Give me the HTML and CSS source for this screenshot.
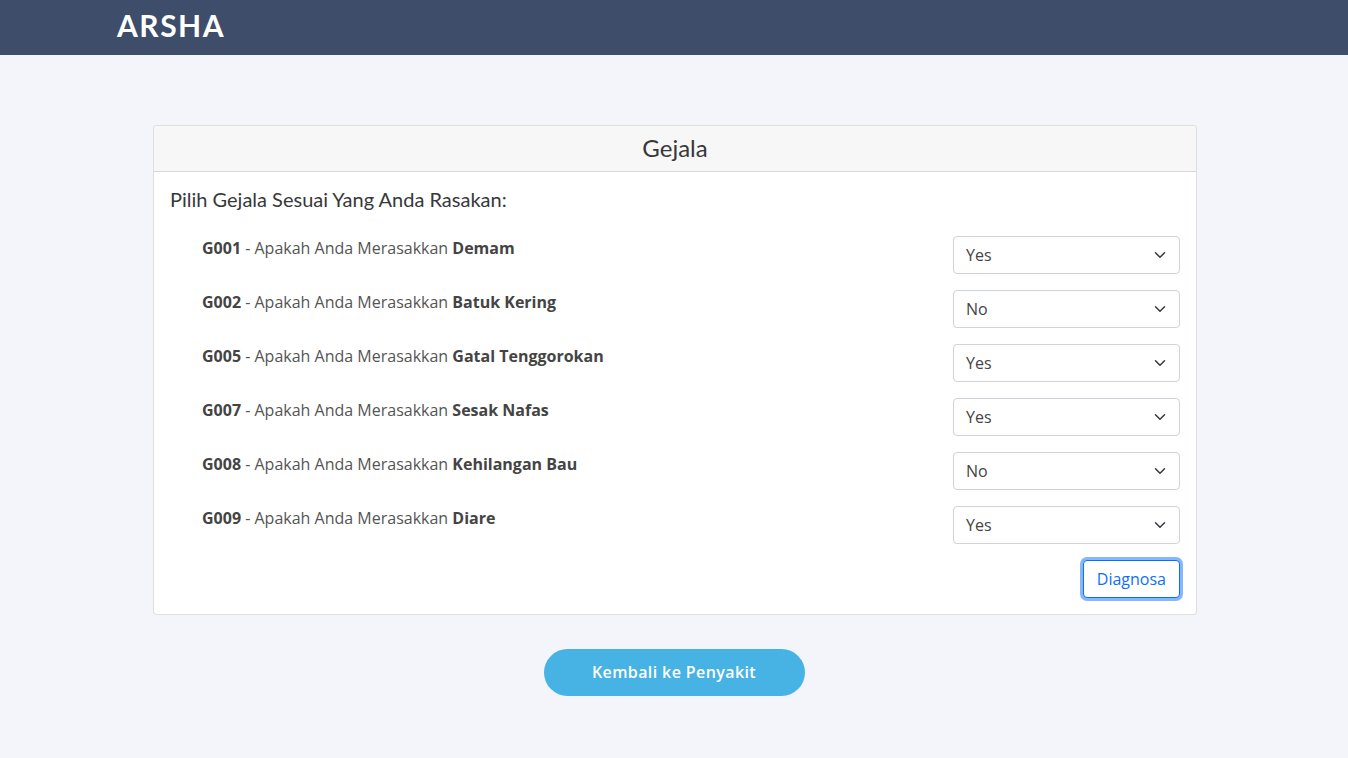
FILE: index.html
```html
<!DOCTYPE html>
<html lang="id">
<head>
<meta charset="utf-8">
<title>Gejala</title>
<link rel="stylesheet" href="styles.css">
</head>
<body>
<header class="topbar">
  <div class="container">
    <span class="logo">ARSHA</span>
  </div>
</header>
<main class="main">
  <div class="card-wrap">
  <div class="card">
    <div class="card-header">Gejala</div>
    <div class="card-body">
      <h5 class="title">Pilih Gejala Sesuai Yang Anda Rasakan:</h5>
      <div class="row">
        <label class="label"><b>G001</b> - Apakah Anda Merasakkan <b>Demam</b></label>
        <div class="select"><span>Yes</span><svg viewBox="0 0 16 16" class="chev"><path d="M2 5l6 6 6-6" fill="none" stroke="#343a40" stroke-width="2" stroke-linecap="round" stroke-linejoin="round"/></svg></div>
      </div>
      <div class="row">
        <label class="label"><b>G002</b> - Apakah Anda Merasakkan <b>Batuk Kering</b></label>
        <div class="select"><span>No</span><svg viewBox="0 0 16 16" class="chev"><path d="M2 5l6 6 6-6" fill="none" stroke="#343a40" stroke-width="2" stroke-linecap="round" stroke-linejoin="round"/></svg></div>
      </div>
      <div class="row">
        <label class="label"><b>G005</b> - Apakah Anda Merasakkan <b>Gatal Tenggorokan</b></label>
        <div class="select"><span>Yes</span><svg viewBox="0 0 16 16" class="chev"><path d="M2 5l6 6 6-6" fill="none" stroke="#343a40" stroke-width="2" stroke-linecap="round" stroke-linejoin="round"/></svg></div>
      </div>
      <div class="row">
        <label class="label"><b>G007</b> - Apakah Anda Merasakkan <b>Sesak Nafas</b></label>
        <div class="select"><span>Yes</span><svg viewBox="0 0 16 16" class="chev"><path d="M2 5l6 6 6-6" fill="none" stroke="#343a40" stroke-width="2" stroke-linecap="round" stroke-linejoin="round"/></svg></div>
      </div>
      <div class="row">
        <label class="label"><b>G008</b> - Apakah Anda Merasakkan <b>Kehilangan Bau</b></label>
        <div class="select"><span>No</span><svg viewBox="0 0 16 16" class="chev"><path d="M2 5l6 6 6-6" fill="none" stroke="#343a40" stroke-width="2" stroke-linecap="round" stroke-linejoin="round"/></svg></div>
      </div>
      <div class="row">
        <label class="label"><b>G009</b> - Apakah Anda Merasakkan <b>Diare</b></label>
        <div class="select"><span>Yes</span><svg viewBox="0 0 16 16" class="chev"><path d="M2 5l6 6 6-6" fill="none" stroke="#343a40" stroke-width="2" stroke-linecap="round" stroke-linejoin="round"/></svg></div>
      </div>
      <div class="actions">
        <button class="btn-diag" type="button">Diagnosa</button>
      </div>
    </div>
  </div>
  </div>
  <div class="back-wrap">
    <a class="btn-back" href="#">Kembali ke Penyakit</a>
  </div>
</main>
</body>
</html>
```
FILE: styles.css
```css
* { box-sizing: border-box; }
html, body { margin: 0; padding: 0; }
body {
  background: #f3f5fa;
  font-family: "Open Sans", "Liberation Sans", sans-serif;
  font-size: 16px;
  color: #444444;
  height: 758px;
  overflow: hidden;
}
.topbar {
  background: #3d4d6a;
  height: 55px;
}
.container {
  width: 1140px;
  margin: 0 auto;
  padding: 0 12px 0 13px;
  height: 100%;
  display: flex;
  align-items: center;
}
.logo {
  font-family: "Lato", "Noto Sans", sans-serif;
  color: #ffffff;
  font-size: 30px;
  font-weight: 700;
  letter-spacing: 1.5px;
  line-height: 1;
  margin-top: -6px;
}
.main {
  padding-top: 70px;
}
.card-wrap {
  padding-left: 2px;
}
.card {
  width: 1044px;
  margin: 0 auto;
  background: #ffffff;
  border: 1px solid rgba(0,0,0,.125);
  border-radius: 4px;
}
.card-header {
  height: 46px;
  background: #f7f7f7;
  border-bottom: 1px solid rgba(0,0,0,.125);
  border-radius: 4px 4px 0 0;
  text-align: center;
  font-family: "Lato", "Noto Sans", sans-serif;
  font-size: 24px;
  font-weight: 400;
  color: #37383a;
  line-height: 44px;
}
.card-body {
  padding: 16px;
}
.title {
  margin: 0 0 24px;
  font-family: "Lato", "Noto Sans", sans-serif;
  font-size: 20px;
  font-weight: 400;
  line-height: 22px;
  padding-bottom: 2px;
  color: #37383a;
}
.row {
  display: flex;
  justify-content: space-between;
  align-items: flex-start;
  padding-left: 32px;
  margin-bottom: 16px;
}
.label {
  line-height: 24px;
  color: #555555;
}
.label b { color: #444444; font-weight: 700; }
.select {
  width: 227px;
  height: 38px;
  border: 1px solid #ced4da;
  border-radius: 4px;
  padding: 0 13px 0 12px;
  display: flex;
  align-items: center;
  justify-content: space-between;
  color: #444444;
  background: #fff;
}
.chev { width: 12px; height: 12px; }
.actions {
  display: flex;
  justify-content: flex-end;
}
.btn-diag {
  height: 38px;
  padding: 0 13px;
  font-family: "Open Sans", "Liberation Sans", sans-serif;
  font-size: 16px;
  color: #0d6efd;
  background: #fff;
  border: 1px solid #0d6efd;
  border-radius: 4px;
  box-shadow: 0 0 0 3px rgba(13,110,253,.5);
}
.back-wrap {
  display: flex;
  justify-content: center;
  padding-top: 34px;
}
.btn-back {
  display: inline-block;
  background: #47b2e4;
  color: #ffffff;
  text-decoration: none;
  font-weight: 600;
  font-size: 16px;
  letter-spacing: 0.4px;
  line-height: 47px;
  height: 47px;
  width: 261px;
  text-align: center;
  border-radius: 50px;
}
```
